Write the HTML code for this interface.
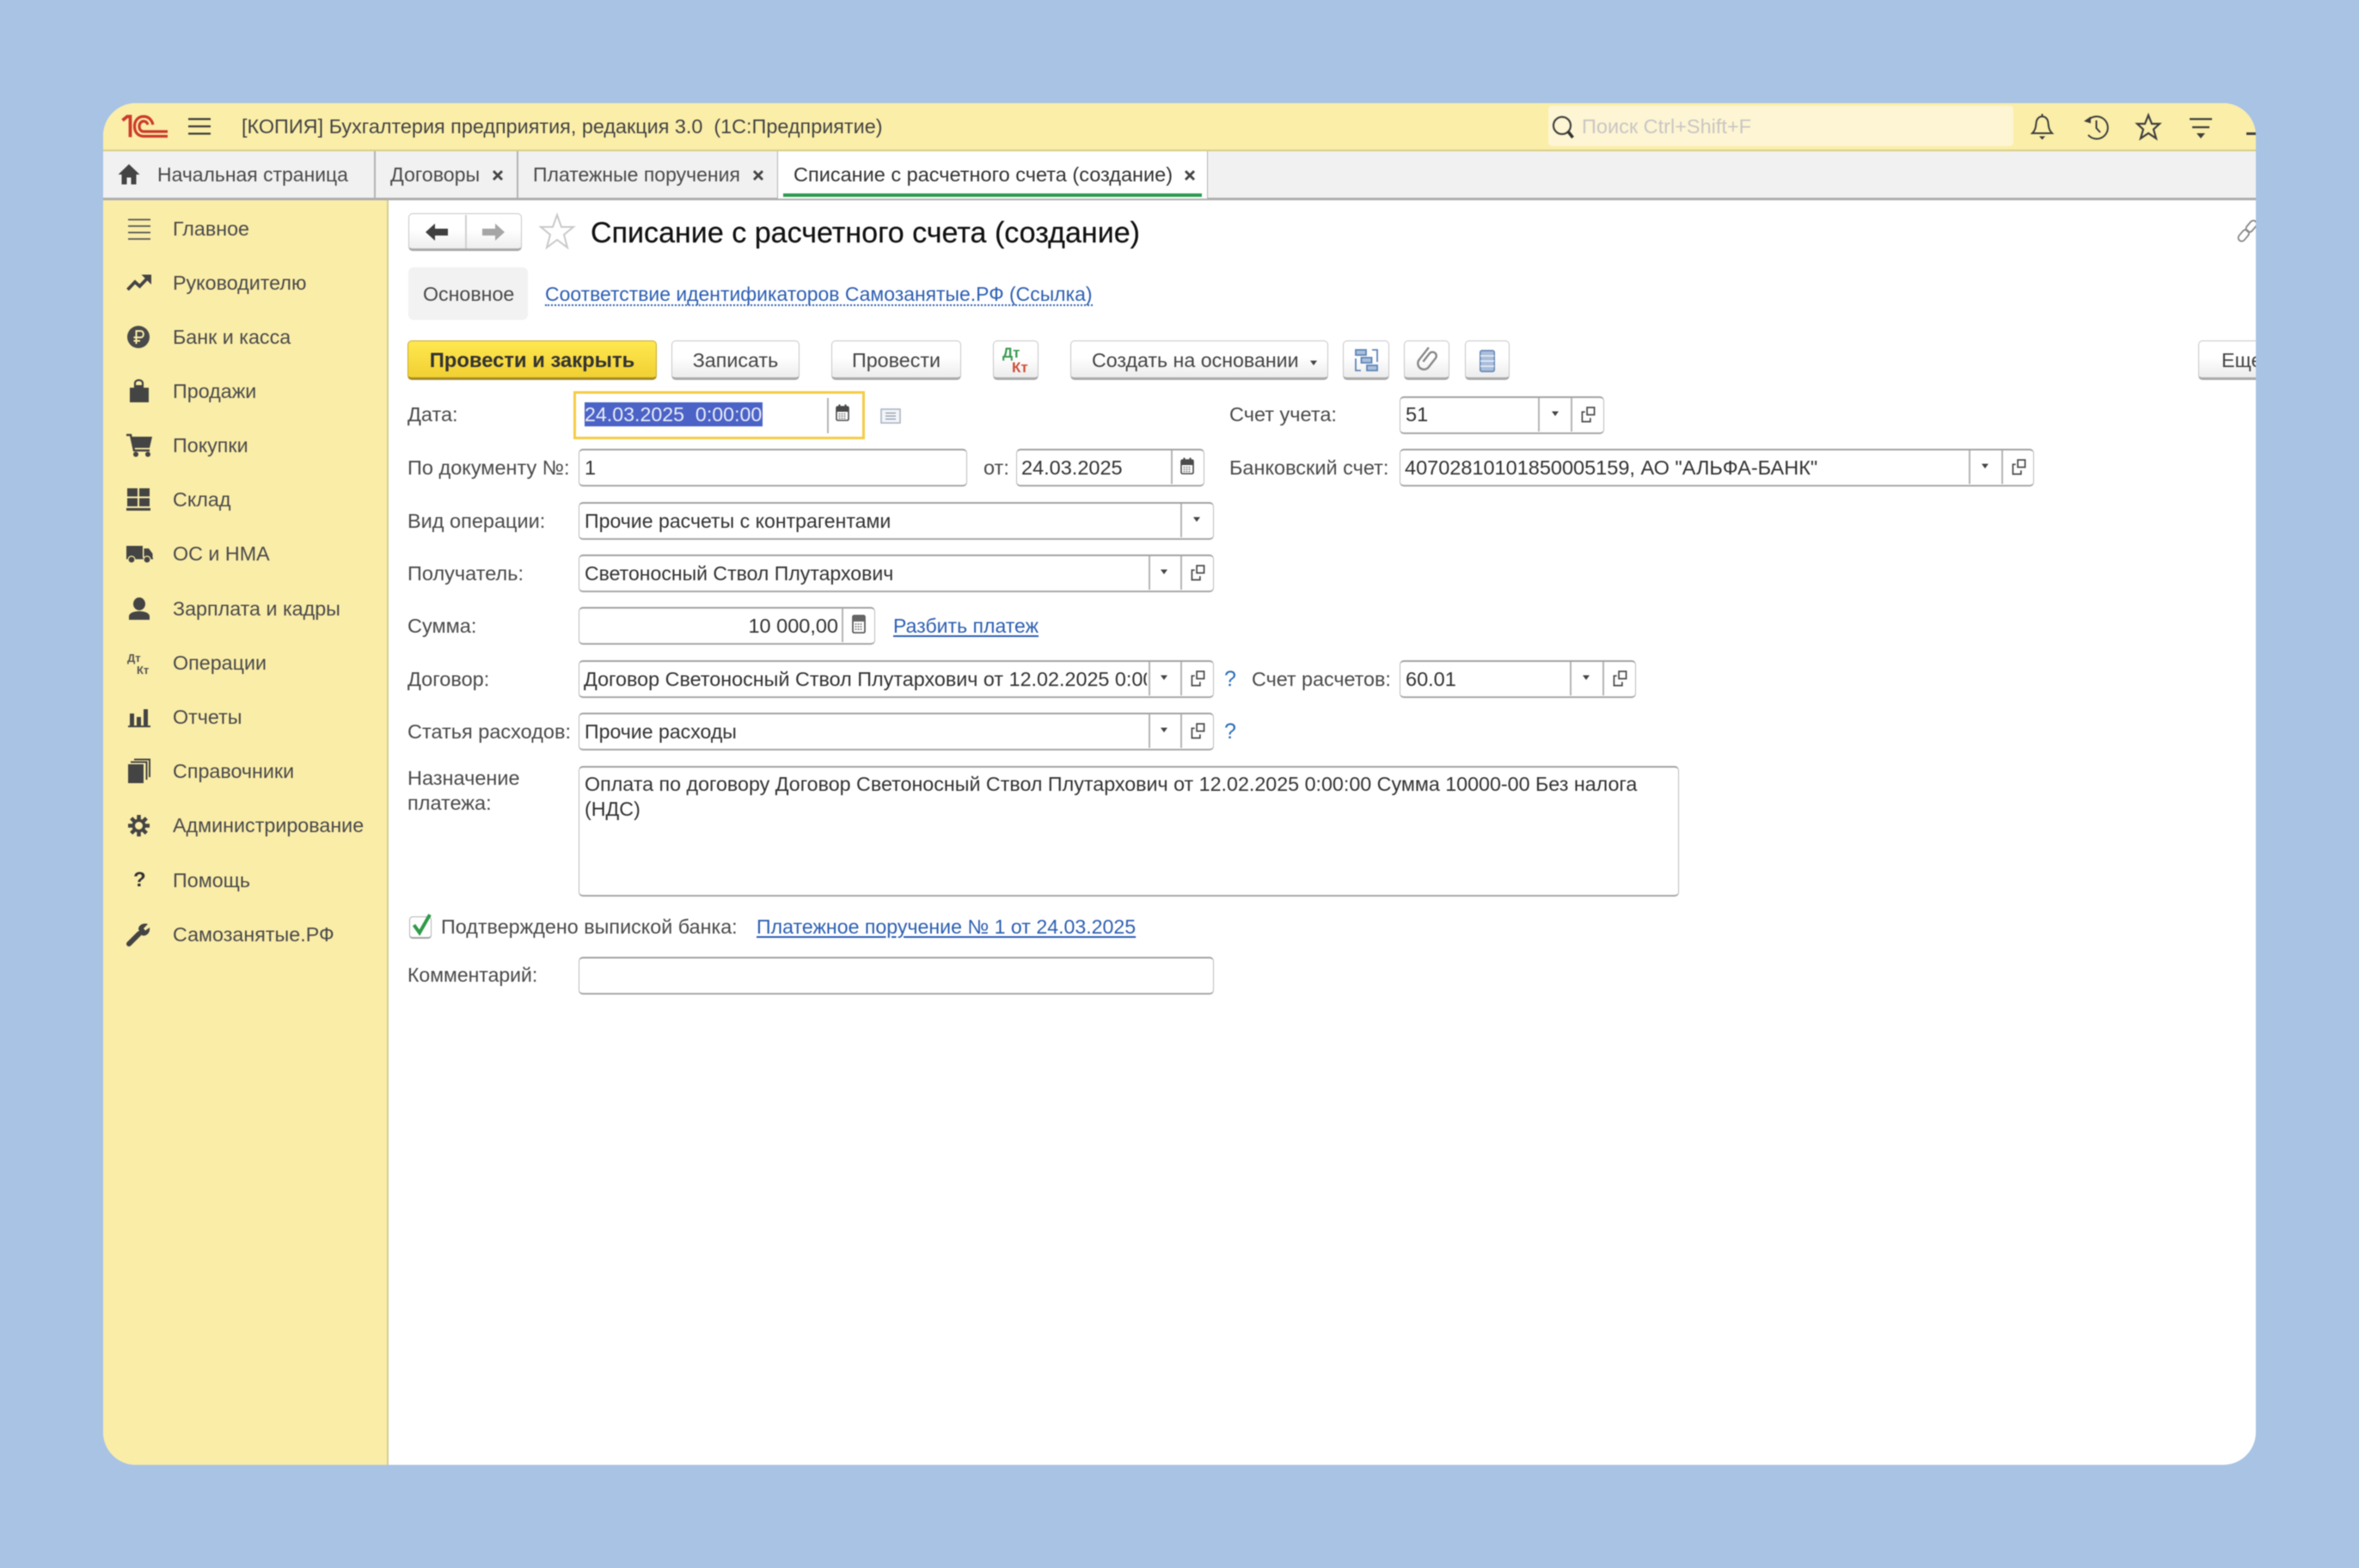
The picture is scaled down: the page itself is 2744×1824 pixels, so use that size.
<!DOCTYPE html>
<html lang="ru"><head><meta charset="utf-8"><title>1С</title>
<style>
*{box-sizing:border-box}
html,body{margin:0;padding:0;width:2744px;height:1824px;overflow:hidden;background:#a9c3e4}
body{font-family:"Liberation Sans",Arial,sans-serif;font-size:23.5px;color:#4a4a4a}
#w{position:absolute;left:120px;top:120px;width:2504px;height:1584px;border-radius:38px;overflow:hidden;background:#fff;filter:blur(.55px)}
#o{position:absolute;left:-120px;top:-120px;width:2744px;height:1824px}
.a,.t,.b,.f,.i{position:absolute}
.t{white-space:nowrap;line-height:30px;height:30px}
.v{color:#333}
.c{font-size:23.1px}
.n{left:201px;font-size:23.3px}
.lnk{color:#2d5fb3;text-decoration:underline;text-underline-offset:3px}
.b{top:396px;height:46px;border:1.5px solid #c6c6c6;border-bottom:3.5px solid #a9a9a9;border-radius:5px;background:linear-gradient(#fff 45%,#ececec);text-align:center;line-height:45px;color:#444;white-space:nowrap;font-size:23.3px}
.f{border:1.5px solid #bdbdbd;border-top:2.5px solid #a3a3a3;border-bottom:2.5px solid #a8a8a8;border-radius:5px;background:#fff}
.s{position:absolute;width:1.5px;background:#b5b5b5}
svg{position:absolute;overflow:visible}
</style></head><body>
<svg width="0" height="0" style="position:absolute"><defs>
<symbol id="dd" viewBox="0 0 10 8"><path d="M1 1.5H9L5 7Z" fill="#444"/></symbol>
<symbol id="op" viewBox="0 0 18 20"><rect x="7.5" y="1" width="9" height="9" fill="none" stroke="#4a4a4a" stroke-width="1.8"/><path d="M5 6.5H1.5V18.5H11.5V14" fill="none" stroke="#4a4a4a" stroke-width="1.8"/></symbol>
<symbol id="cal" viewBox="0 0 16 20"><rect x="1" y="3" width="14" height="16" rx="1.5" fill="#fff" stroke="#4a4a4a" stroke-width="1.6"/><rect x="1" y="3" width="14" height="6" fill="#4a4a4a"/><path d="M4.5 0.5V4M11.5 0.5V4" stroke="#4a4a4a" stroke-width="2"/><path d="M3.5 11.5H12.5M3.5 14H12.5M3.5 16.5H12.5" stroke="#777" stroke-width="1.2" stroke-dasharray="2 1"/></symbol>
</defs></svg>
<div id="w"><div id="o">

<!-- header -->
<div class="a" style="left:120px;top:120px;width:2504px;height:56px;background:#faeea8;border-bottom:2.5px solid #d8cd8c"></div>
<svg style="left:141px;top:132px" width="56" height="30" viewBox="0 0 56 30"><g fill="none" stroke="#cd3b2c" stroke-width="3.2"><path d="M1.500 8 7 3.500H10.500V27.500" stroke-width="3.800"/><path d="M37 13C35 6 31 3.500 26 3.500C19 3.500 15.500 9 15.500 15C15.500 22 20 26.500 26 26.500H54"/><path d="M31 13C30 10 28 9 26 9C23 9 21 12 21 15C21 18.500 23 21 26 21H54"/></g></svg>
<svg style="left:219px;top:136px" width="26" height="22"><path d="M0 2.500H26M0 11H26M0 19.500H26" stroke="#3c3c3c" stroke-width="2.200"/></svg>
<div class="t" style="left:281px;top:132px;color:#444;font-size:23.4px">[КОПИЯ] Бухгалтерия предприятия, редакция 3.0&nbsp; (1С:Предприятие)</div>
<div class="a" style="left:1801px;top:123px;width:541px;height:47px;background:#fdf5d3;border-radius:4px"></div>
<svg style="left:1804px;top:134px" width="30" height="30"><circle cx="13" cy="12" r="10" fill="none" stroke="#444" stroke-width="2.200"/><path d="M20 19 25.500 26" stroke="#333" stroke-width="3.500"/></svg>
<div class="t" style="left:1840px;top:132px;color:#c9c6c4">Поиск Ctrl+Shift+F</div>
<svg style="left:2362px;top:132px" width="28" height="32" fill="none" stroke="#3f3f3f" stroke-width="2"><path d="M2 23C6 19 6 15 6.500 11C7 6 10 3.500 13.500 3.500C17 3.500 20 6 20.500 11C21 15 21 19 25 23Z"/><path d="M13.500 0.500V3.500" /><path d="M10 26.500H17L13.500 30.500Z" fill="#3f3f3f" stroke="none"/></svg>
<svg style="left:2423px;top:132px" width="32" height="32" fill="none" stroke="#3f3f3f" stroke-width="2"><path d="M6 8A13 13 0 1 1 6 25"/><path d="M15.500 8V17L20 22"/><path d="M1 9 9 3.500V11.500Z" fill="#3f3f3f" stroke="none"/></svg>
<svg style="left:2484px;top:132px" width="30" height="32" fill="none" stroke="#3f3f3f" stroke-width="2.200"><path d="M15 2 19 12H28L21 18.500 24 29 15 23 6 29 9 18.500 2 12H11Z"/></svg>
<svg style="left:2546px;top:136px" width="28" height="26"><path d="M1 2.500H27M4 12H24" stroke="#3f3f3f" stroke-width="2.200"/><path d="M9 19H19L14 25Z" fill="#3f3f3f"/></svg>
<div class="a" style="left:2613px;top:154px;width:11px;height:2.500px;background:#3f3f3f"></div>

<!-- tabs -->
<div class="a" style="left:120px;top:176px;width:2504px;height:57px;background:#f1f1f1;border-bottom:3px solid #aeaeae"></div>
<div class="a" style="left:904px;top:176px;width:501px;height:55px;background:#fff;border-left:1.5px solid #b3b3b3;border-right:1.5px solid #b3b3b3"></div>
<div class="a" style="left:435px;top:176px;width:1.500px;height:55px;background:#b3b3b3"></div>
<div class="a" style="left:601px;top:176px;width:1.500px;height:55px;background:#b3b3b3"></div>
<div class="a" style="left:911px;top:225px;width:487px;height:3.500px;background:#2c9a4f"></div>
<svg style="left:137px;top:190px" width="26" height="26"><path d="M13 1 25.500 13H21.500V24.500H15.500V16.500H10.500V24.500H4.500V13H0.500Z" fill="#444"/></svg>
<div class="t" style="left:183px;top:188px;font-size:22.95px">Начальная страница</div>
<div class="t" style="left:454px;top:188px;font-size:23.2px">Договоры</div>
<div class="t" style="left:620px;top:188px;font-size:23px">Платежные поручения</div>
<div class="t" style="left:923px;top:188px;color:#333">Списание с расчетного счета (создание)</div>
<svg style="left:572px;top:197px" width="14" height="14"><path d="M2 2 12 12M12 2 2 12" stroke="#444" stroke-width="2.800"/></svg>
<svg style="left:875px;top:197px" width="14" height="14"><path d="M2 2 12 12M12 2 2 12" stroke="#444" stroke-width="2.800"/></svg>
<svg style="left:1377px;top:197px" width="14" height="14"><path d="M2 2 12 12M12 2 2 12" stroke="#444" stroke-width="2.800"/></svg>

<!-- sidebar -->
<div class="a" style="left:120px;top:233px;width:332px;height:1471px;background:#faeda8;border-right:2.500px solid #d6cc90"></div>
<div class="t n" style="top:251px">Главное</div>
<div class="t n" style="top:314px">Руководителю</div>
<div class="t n" style="top:377px">Банк и касса</div>
<div class="t n" style="top:440px">Продажи</div>
<div class="t n" style="top:503px">Покупки</div>
<div class="t n" style="top:566px">Склад</div>
<div class="t n" style="top:629px">ОС и НМА</div>
<div class="t n" style="top:693px">Зарплата и кадры</div>
<div class="t n" style="top:756px">Операции</div>
<div class="t n" style="top:819px">Отчеты</div>
<div class="t n" style="top:882px">Справочники</div>
<div class="t n" style="top:945px">Администрирование</div>
<div class="t n" style="top:1009px">Помощь</div>
<div class="t n" style="top:1072px">Самозанятые.РФ</div>

<svg style="left:149px;top:254px" width="26" height="26"><path d="M0 1.500H26M0 9H26M0 16.500H26M0 24H26" stroke="#555" stroke-width="1.800"/></svg>
<svg style="left:147px;top:318px" width="30" height="22"><path d="M1.500 19 10 10 15.500 15 25 5" fill="none" stroke="#444" stroke-width="3.800"/><path d="M17.500 1.500H29V13Z" fill="#444"/></svg>
<svg style="left:148px;top:379px" width="26" height="26"><circle cx="13" cy="13" r="13" fill="#4a4a4a"/><path d="M10.500 21V6H15.500C20 6 20 13.500 15.500 13.500H7.500M7.500 17.500H15" fill="none" stroke="#faeda8" stroke-width="2"/></svg>
<svg style="left:150px;top:440px" width="24" height="28"><path d="M1 11H7V8H16V11H23V28H1Z" fill="#444"/><path d="M7 12V6C7 1 16 1 16 6V12" fill="none" stroke="#444" stroke-width="2.200"/></svg>
<svg style="left:147px;top:504px" width="32" height="28"><path d="M0 2H5L9 20H27" fill="none" stroke="#444" stroke-width="2.500"/><path d="M6.500 4H30L27 17H9Z" fill="#444"/><circle cx="11" cy="24.500" r="3" fill="#444"/><circle cx="25" cy="24.500" r="3" fill="#444"/></svg>
<svg style="left:147px;top:568px" width="28" height="27" fill="#444"><rect x="1" y="0" width="12" height="9.500"/><rect x="15" y="0" width="12" height="9.500"/><rect x="1" y="11.500" width="12" height="9.500"/><rect x="15" y="11.500" width="12" height="9.500"/><rect x="0" y="23" width="28" height="3"/></svg>
<svg style="left:147px;top:634px" width="31" height="22" fill="#444"><rect x="0" y="1" width="19" height="14"/><path d="M20.500 4H26L30.500 10V16.500H20.500Z"/><rect x="0" y="15" width="31" height="1.500"/><circle cx="6" cy="17" r="4" stroke="#faeda8" stroke-width="1.200"/><circle cx="24" cy="17" r="4" stroke="#faeda8" stroke-width="1.200"/></svg>
<svg style="left:150px;top:695px" width="24" height="27" fill="#444"><ellipse cx="12" cy="7.500" rx="7" ry="7.500"/><path d="M0 26V22C0 18 6 16 12 16C18 16 24 18 24 22V26Z"/></svg>
<div class="t" style="left:148px;top:756px;width:20px;font-size:13px;font-weight:bold;line-height:14px;height:14px;color:#555;transform:translateY(3px)">Дт</div>
<div class="t" style="left:159px;top:770px;font-size:13px;font-weight:bold;line-height:14px;height:14px;color:#555;transform:translateY(3px)">Кт</div>
<svg style="left:149px;top:824px" width="26" height="22" fill="#444"><rect x="2" y="6" width="5" height="14"/><rect x="10" y="10" width="5" height="10"/><rect x="18" y="1" width="5" height="19"/><rect x="0" y="20" width="26" height="2"/></svg>
<svg style="left:148px;top:882px" width="27" height="30"><rect x="1" y="7" width="18" height="22" fill="#444"/><path d="M4 4.500H22.500V25M8 1.500H26V22" fill="none" stroke="#444" stroke-width="2"/></svg>
<svg style="left:148px;top:947px" width="27" height="27"><g stroke="#444" stroke-width="4.500"><path d="M13.500 1V26M1 13.500H26M4.700 4.700 22.300 22.300M22.300 4.700 4.700 22.300"/></g><circle cx="13.500" cy="13.500" r="8" fill="#444"/><circle cx="13.500" cy="13.500" r="4.500" fill="#faeda8"/></svg>
<div class="t" style="left:155px;top:1009px;font-weight:bold;color:#333;font-size:24px">?</div>
<svg style="left:147px;top:1073px" width="28" height="28"><path d="M3 25 15 13" stroke="#444" stroke-width="6" stroke-linecap="round"/><path d="M14 8C14 3 20 0 25 2L20 7 22 9.500 27 6C28 12 23 17 18 15Z" fill="#444"/></svg>

<!-- nav -->
<div class="a" style="left:475px;top:248px;width:132px;height:44px;border:1.500px solid #c6c6c6;border-bottom:3.500px solid #a9a9a9;border-radius:5px;background:linear-gradient(#fff 45%,#eee)"></div>
<div class="a" style="left:541px;top:250px;width:1.500px;height:39px;background:#d0d0d0"></div>
<svg style="left:495px;top:260px" width="26" height="20"><path d="M0 10 11 0V6H26V14H11V20Z" fill="#3f3f3f"/></svg>
<svg style="left:561px;top:260px" width="26" height="20"><path d="M26 10 15 0V6H0V14H15V20Z" fill="#a6a6a6"/></svg>
<svg style="left:627px;top:248px" width="42" height="42"><path d="M21 2 26 16H40L29 25 33 40 21 31 9 40 13 25 2 16H16Z" fill="#fff" stroke="#c9c9c9" stroke-width="2"/></svg>
<div class="t" style="left:687px;top:251px;font-size:34.05px;color:#111;height:40px;line-height:40px;-webkit-text-stroke:.2px #111">Списание с расчетного счета (создание)</div>
<svg style="left:2601px;top:254px" width="26" height="30" fill="none" stroke="#888" stroke-width="1.800"><g transform="rotate(40 13 15)"><rect x="9" y="0" width="8" height="15" rx="4"/><rect x="9" y="14" width="8" height="15" rx="4"/></g></svg>

<div class="a" style="left:475px;top:311px;width:139px;height:61px;background:#f2f2f2;border-radius:6px"></div>
<div class="t" style="left:492px;top:327px;font-size:23.2px">Основное</div>
<div class="t" style="left:634px;top:327px;color:#2d5fb3;border-bottom:2px dotted #2d5fb3;height:29px;font-size:22.95px">Соответствие идентификаторов Самозанятые.РФ (Ссылка)</div>

<!-- command bar -->
<div class="b" style="left:474px;width:290px;background:linear-gradient(#ffe850,#f1d033);border-color:#c7aa2e;border-bottom-color:#a58c23;color:#333;font-weight:bold;font-size:23.8px">Провести и закрыть</div>
<div class="b" style="left:781px;width:149px">Записать</div>
<div class="b" style="left:967px;width:151px">Провести</div>
<div class="b" style="left:1155px;width:53px"></div>
<div class="t" style="left:1166px;top:403px;font-size:17px;font-weight:bold;color:#3c9a52;line-height:16px;height:16px">Дт</div>
<div class="t" style="left:1177px;top:420px;font-size:17px;font-weight:bold;color:#cf4f36;line-height:16px;height:16px">Кт</div>
<div class="b" style="left:1245px;width:300px;text-align:left;padding-left:24px;font-size:23.2px">Создать на основании</div>
<svg style="left:1523px;top:418px" width="10" height="8"><use href="#dd"/></svg>
<div class="b" style="left:1562px;width:54px"></div>
<svg style="left:1576px;top:406px" width="27" height="26" fill="none" stroke="#5f85b8" stroke-width="1.800"><rect x="1" y="1" width="12" height="6" fill="#a9c0dc"/><rect x="7.500" y="10" width="12" height="6" fill="#a9c0dc"/><rect x="14" y="19" width="12" height="6" fill="#a9c0dc"/><path d="M20 1H26V15M7 25H1V11"/></svg>
<div class="b" style="left:1633px;width:53px"></div>
<svg style="left:1648px;top:403px" width="24" height="30" fill="none" stroke="#888" stroke-width="2.400"><path d="M5 3V21A7 7 0 0 0 19 21V8A4.500 4.500 0 0 0 10 8V20" transform="rotate(38 12 15)"/></svg>
<div class="b" style="left:1704px;width:52px"></div>
<svg style="left:1721px;top:407px" width="18" height="26"><rect x="0.800" y="0.800" width="16.400" height="24.400" rx="2" fill="#a9bedb" stroke="#6688b5" stroke-width="1.600"/><path d="M1 7H17M1 13H17M1 19H17" stroke="#eef2f8" stroke-width="1.600"/></svg>
<div class="b" style="left:2557px;width:90px;text-align:left;padding-left:26px">Еще</div>

<!-- row 1 -->
<div class="t" style="left:474px;top:467px">Дата:</div>
<div class="a" style="left:667px;top:455px;width:339px;height:56px;border:3.500px solid #f5cc45;background:#fff"></div>
<div class="a" style="left:680px;top:468px;width:207px;height:28px;background:#4b63c6"></div>
<div class="t" style="left:680px;top:467px;color:#e8ecf8;white-space:pre;font-size:23.2px">24.03.2025  0:00:00</div>
<div class="s" style="left:962px;top:463px;height:41px"></div>
<svg style="left:972px;top:470px" width="16" height="20"><use href="#cal"/></svg>
<svg style="left:1024px;top:475px" width="24" height="18"><rect x="1" y="1" width="22" height="16" fill="#f3f5f8" stroke="#aab6c6" stroke-width="1.600"/><path d="M6 5.500H18M6 9H18M6 12.500H18" stroke="#8a97a8" stroke-width="1.300"/></svg>

<div class="t" style="left:1430px;top:467px">Счет учета:</div>
<div class="f" style="left:1628px;top:461px;width:238px;height:44px"><div class="s" style="left:160px;top:0;height:39px"></div><div class="s" style="left:198px;top:0;height:39px"></div></div>
<div class="t v" style="left:1635px;top:467px">51</div>
<svg style="left:1804px;top:477px" width="10" height="8"><use href="#dd"/></svg>
<svg style="left:1839px;top:473px" width="17" height="19"><use href="#op"/></svg>

<!-- row 2 -->
<div class="t" style="left:474px;top:529px">По документу №:</div>
<div class="f" style="left:673px;top:522px;width:452px;height:44px"></div>
<div class="t v" style="left:680px;top:529px">1</div>
<div class="t" style="left:1144px;top:529px">от:</div>
<div class="f" style="left:1182px;top:522px;width:219px;height:44px"><div class="s" style="left:179px;top:0;height:39px"></div></div>
<div class="t v" style="left:1188px;top:529px">24.03.2025</div>
<svg style="left:1373px;top:532px" width="16" height="20"><use href="#cal"/></svg>
<div class="t" style="left:1430px;top:529px">Банковский счет:</div>
<div class="f" style="left:1628px;top:522px;width:738px;height:44px"><div class="s" style="left:661px;top:0;height:39px"></div><div class="s" style="left:699px;top:0;height:39px"></div></div>
<div class="t v" style="left:1634px;top:529px">40702810101850005159, АО "АЛЬФА-БАНК"</div>
<svg style="left:2304px;top:538px" width="10" height="8"><use href="#dd"/></svg>
<svg style="left:2340px;top:534px" width="17" height="19"><use href="#op"/></svg>

<!-- row 3 -->
<div class="t" style="left:474px;top:591px">Вид операции:</div>
<div class="f" style="left:673px;top:584px;width:739px;height:44px"><div class="s" style="left:699px;top:0;height:39px"></div></div>
<div class="t v c" style="left:680px;top:591px">Прочие расчеты с контрагентами</div>
<svg style="left:1387px;top:600px" width="10" height="8"><use href="#dd"/></svg>

<!-- row 4 -->
<div class="t" style="left:474px;top:652px">Получатель:</div>
<div class="f" style="left:673px;top:645px;width:739px;height:44px"><div class="s" style="left:662px;top:0;height:39px"></div><div class="s" style="left:699px;top:0;height:39px"></div></div>
<div class="t v" style="left:680px;top:652px;font-size:23.05px">Светоносный Ствол Плутархович</div>
<svg style="left:1349px;top:661px" width="10" height="8"><use href="#dd"/></svg>
<svg style="left:1385px;top:657px" width="17" height="19"><use href="#op"/></svg>

<!-- row 5 -->
<div class="t" style="left:474px;top:713px">Сумма:</div>
<div class="f" style="left:673px;top:706px;width:345px;height:44px"><div class="s" style="left:305px;top:0;height:39px"></div></div>
<div class="t v" style="left:673px;top:713px;width:302px;text-align:right">10 000,00</div>
<svg style="left:991px;top:715px" width="16" height="22"><rect x="1" y="1" width="14" height="20" rx="1.500" fill="#fff" stroke="#4a4a4a" stroke-width="1.600"/><rect x="1" y="1" width="14" height="7" fill="#666"/><path d="M3.500 11H12.500M3.500 14H12.500M3.500 17H12.500" stroke="#666" stroke-width="1.300" stroke-dasharray="2 1"/></svg>
<div class="t lnk" style="left:1039px;top:713px;font-size:23.05px">Разбить платеж</div>

<!-- row 6 -->
<div class="t" style="left:474px;top:775px">Договор:</div>
<div class="f" style="left:673px;top:768px;width:739px;height:44px;overflow:hidden"><div class="s" style="left:662px;top:0;height:39px"></div><div class="s" style="left:699px;top:0;height:39px"></div></div>
<div class="t v" style="left:679px;top:775px;width:655px;overflow:hidden;font-size:23.35px">Договор Светоносный Ствол Плутархович от 12.02.2025 0:00:00</div>
<svg style="left:1349px;top:784px" width="10" height="8"><use href="#dd"/></svg>
<svg style="left:1385px;top:780px" width="17" height="19"><use href="#op"/></svg>
<div class="t" style="left:1424px;top:775px;color:#2d6db5;font-size:25px">?</div>
<div class="t" style="left:1456px;top:775px;font-size:23.3px">Счет расчетов:</div>
<div class="f" style="left:1628px;top:768px;width:275px;height:44px"><div class="s" style="left:197px;top:0;height:39px"></div><div class="s" style="left:235px;top:0;height:39px"></div></div>
<div class="t v" style="left:1635px;top:775px">60.01</div>
<svg style="left:1840px;top:784px" width="10" height="8"><use href="#dd"/></svg>
<svg style="left:1876px;top:780px" width="17" height="19"><use href="#op"/></svg>

<!-- row 7 -->
<div class="t" style="left:474px;top:836px">Статья расходов:</div>
<div class="f" style="left:673px;top:829px;width:739px;height:44px"><div class="s" style="left:662px;top:0;height:39px"></div><div class="s" style="left:699px;top:0;height:39px"></div></div>
<div class="t v c" style="left:680px;top:836px">Прочие расходы</div>
<svg style="left:1349px;top:845px" width="10" height="8"><use href="#dd"/></svg>
<svg style="left:1385px;top:841px" width="17" height="19"><use href="#op"/></svg>
<div class="t" style="left:1424px;top:836px;color:#2d6db5;font-size:25px">?</div>

<!-- textarea -->
<div class="t" style="left:474px;top:890px">Назначение</div>
<div class="t" style="left:474px;top:919px">платежа:</div>
<div class="f" style="left:673px;top:891px;width:1280px;height:152px"></div>
<div class="t v" style="left:680px;top:897px;font-size:23.27px">Оплата по договору Договор Светоносный Ствол Плутархович от 12.02.2025 0:00:00 Сумма 10000-00 Без налога</div>
<div class="t v" style="left:680px;top:926px;font-size:23.27px">(НДС)</div>

<!-- checkbox -->
<div class="a" style="left:476px;top:1066px;width:26px;height:26px;border:1.500px solid #b4b4b4;border-bottom:2.500px solid #a3a3a3;border-radius:4px;background:#fff"></div>
<svg style="left:479px;top:1062px" width="24" height="26"><path d="M2.500 14 9 23 21 2" fill="none" stroke="#2f9a48" stroke-width="4"/></svg>
<div class="t" style="left:513px;top:1063px;font-size:23.35px">Подтверждено выпиской банка:</div>
<div class="t lnk" style="left:880px;top:1063px;font-size:23.15px">Платежное поручение № 1 от 24.03.2025</div>

<div class="t" style="left:474px;top:1119px;font-size:23px">Комментарий:</div>
<div class="f" style="left:673px;top:1113px;width:739px;height:44px"></div>

</div></div>
</body></html>
